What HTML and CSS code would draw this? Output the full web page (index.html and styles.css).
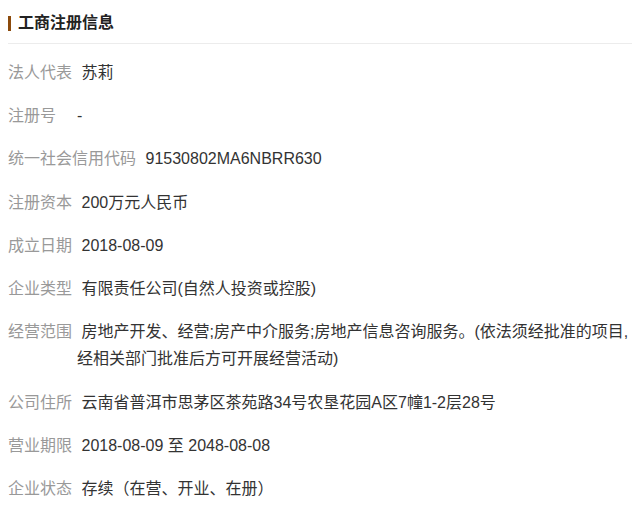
FILE: index.html
```html
<!DOCTYPE html>
<html lang="zh-CN">
<head>
  <meta charset="UTF-8">
  <title>工商注册信息</title>
  <link rel="stylesheet" href="styles.css">
</head>
<body>
  <div class="info-panel">
    <div class="panel-head">
      <h3 class="panel-title">工商注册信息</h3>
    </div>
    <ul class="info-list">
      <li class="info-row"><span class="label">法人代表</span><span class="value">苏莉</span></li>
      <li class="info-row"><span class="label">注册号</span><span class="value plain">-</span></li>
      <li class="info-row"><span class="label">统一社会信用代码</span><span class="value">91530802MA6NBRR630</span></li>
      <li class="info-row"><span class="label">注册资本</span><span class="value">200万元人民币</span></li>
      <li class="info-row"><span class="label">成立日期</span><span class="value">2018-08-09</span></li>
      <li class="info-row"><span class="label">企业类型</span><span class="value">有限责任公司(自然人投资或控股)</span></li>
      <li class="info-row"><span class="label">经营范围</span><span class="value">房地产开发、经营;房产中介服务;房地产信息咨询服务。(依法须经批准的项目,经相关部门批准后方可开展经营活动)</span></li>
      <li class="info-row"><span class="label">公司住所</span><span class="value">云南省普洱市思茅区茶苑路34号农垦花园A区7幢1-2层28号</span></li>
      <li class="info-row"><span class="label">营业期限</span><span class="value">2018-08-09 至 2048-08-08</span></li>
      <li class="info-row"><span class="label">企业状态</span><span class="value">存续（在营、开业、在册）</span></li>
    </ul>
  </div>
</body>
</html>
```

FILE: styles.css
```css
body {
    margin: 0;
    padding: 0;
    background-color: #fff;
    font-family: "Liberation Sans", "Noto Sans CJK SC", sans-serif;
    font-size: 16px;
    color: #333;
}

.info-panel {
    padding: 0 4px 0 8px;
}

.panel-head {
    padding: 11px 0 8px;
    border-bottom: 1px solid #ececec;
}

.panel-title {
    margin: 0;
    display: flex;
    align-items: center;
    font-size: 16px;
    line-height: 24px;
    font-weight: bold;
    color: #222;
}

.panel-title::before {
    content: "";
    width: 3px;
    height: 15px;
    margin-right: 7px;
    background-color: #8b4a0c;
}

.info-list {
    list-style: none;
    margin: 0;
    padding: 7px 0 0;
}

.info-row {
    display: flex;
    align-items: flex-start;
    padding: 8px 0;
    line-height: 1.7;
}

.label {
    flex-shrink: 0;
    min-width: 64px;
    margin-right: 5px;
    color: #999;
}

.value {
    flex: 1;
    text-indent: 4.5px;
    color: #333;
}

.value.plain {
    text-indent: 0;
}
```
